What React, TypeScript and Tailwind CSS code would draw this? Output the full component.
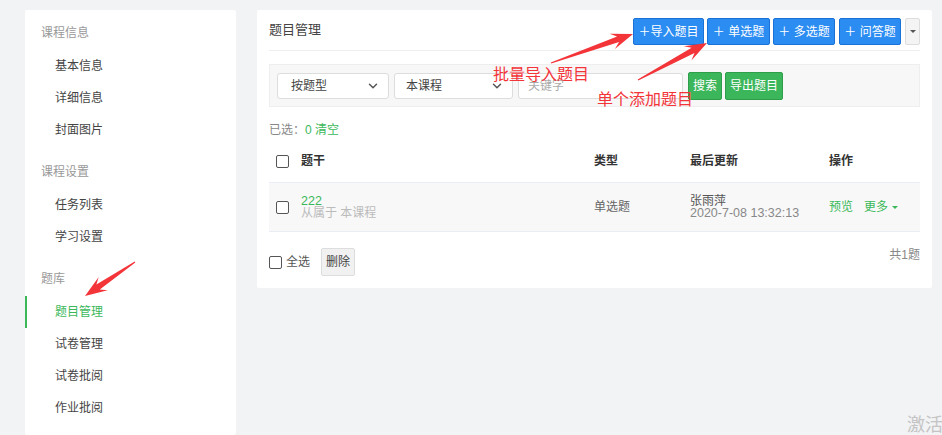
import { ChevronDown } from "lucide-react";

const sideGroups = [
  { title: "课程信息", items: ["基本信息", "详细信息", "封面图片"] },
  { title: "课程设置", items: ["任务列表", "学习设置"] },
  { title: "题库", items: ["题目管理", "试卷管理", "试卷批阅", "作业批阅"] },
];

const ACTIVE = "题目管理";

// tapered screenshot-style arrow, tail -> tip
function arrowPoints(x1: number, y1: number, x2: number, y2: number) {
  const dx = x2 - x1;
  const dy = y2 - y1;
  const len = Math.hypot(dx, dy);
  const ux = dx / len;
  const uy = dy / len;
  const nx = -uy;
  const ny = ux;
  const headLen = 22;
  const jx = x2 - ux * headLen * 0.72;
  const jy = y2 - uy * headLen * 0.72;
  const wx = x2 - ux * headLen;
  const wy = y2 - uy * headLen;
  const pts = [
    [x1 + nx * 0.6, y1 + ny * 0.6],
    [jx + nx * 3, jy + ny * 3],
    [wx + nx * 8, wy + ny * 8],
    [x2, y2],
    [wx - nx * 8, wy - ny * 8],
    [jx - nx * 3, jy - ny * 3],
    [x1 - nx * 0.6, y1 - ny * 0.6],
  ];
  return pts.map((p) => `${p[0].toFixed(1)},${p[1].toFixed(1)}`).join(" ");
}

function Checkbox() {
  return <span className="inline-block w-[13px] h-[13px] border border-[#555] rounded-[2px] bg-white" />;
}

function Sidebar() {
  return (
    <aside className="w-[211px] shrink-0 bg-white rounded-[2px] pt-[13px] pb-[24px]">
      {sideGroups.map((g, gi) => (
        <div key={g.title} className={gi > 0 ? "mt-[16px]" : ""}>
          <div className="h-[20px] leading-[20px] pl-[16px] text-[12px] text-[#999]">{g.title}</div>
          <ul className="mt-[7px]">
            {g.items.map((item) => {
              const active = item === ACTIVE;
              return (
                <li
                  key={item}
                  className={
                    active
                      ? "h-[32px] leading-[32px] pl-[28px] text-[12px] text-[#3bb85a] border-l-2 border-[#3bb85a]"
                      : "h-[32px] leading-[32px] pl-[30px] text-[12px] text-[#444]"
                  }
                >
                  {item}
                </li>
              );
            })}
          </ul>
        </div>
      ))}
    </aside>
  );
}

function BlueButton({ label, className }: { label: string; className: string }) {
  return (
    <button
      type="button"
      className={`h-[27px] ${className} bg-[#2b8cf2] border border-[#1b72d6] text-white text-[12px] rounded-[2px] flex items-center justify-center whitespace-nowrap`}
    >
      {label}
    </button>
  );
}

function FakeSelect({ label, width, pl }: { label: string; width: string; pl: string }) {
  return (
    <div
      className={`${width} ${pl} h-[26px] bg-white border border-[#ddd] rounded-[3px] flex items-center justify-between pr-[8px] text-[12px] text-[#444]`}
    >
      <span>{label}</span>
      <ChevronDown size={14} strokeWidth={2.5} className="text-[#555]" />
    </div>
  );
}

const rowCell = "h-[50px] bg-[#f8f8f8] border-t border-b border-[#e9eef4]";

function MainPanel() {
  return (
    <section className="w-[675px] shrink-0 self-start bg-white rounded-[2px] px-[12px] pb-[12px]">
      {/* header */}
      <div className="flex items-center justify-between pt-[8px] pb-[5px] border-b border-[#eee]">
        <h2 className="text-[13px] text-[#444] font-normal -mt-[4px]">题目管理</h2>
        <div className="flex items-center">
          <BlueButton label="＋导入题目" className="w-[71px]" />
          <BlueButton label="＋ 单选题" className="w-[63px] ml-[3px]" />
          <BlueButton label="＋ 多选题" className="w-[62px] ml-[3px]" />
          <BlueButton label="＋ 问答题" className="w-[62px] ml-[4px]" />
          <button
            type="button"
            className="w-[15px] h-[27px] ml-[4px] bg-[#f4f4f4] border border-[#ddd] rounded-[2px] flex items-center justify-center"
          >
            <span className="block w-0 h-0 border-l-[3px] border-r-[3px] border-t-[3px] border-l-transparent border-r-transparent border-t-[#555]" />
          </button>
        </div>
      </div>

      {/* filter bar */}
      <div className="mt-[13px] h-[43px] bg-[#f7f7f7] border border-[#eee] flex items-center pl-[7px]">
        <FakeSelect label="按题型" width="w-[112px]" pl="pl-[13px]" />
        <div className="ml-[5px]">
          <FakeSelect label="本课程" width="w-[119px]" pl="pl-[11px]" />
        </div>
        <div className="ml-[5px] w-[165px] h-[26px] bg-white border border-[#ddd] rounded-[3px] flex items-center pl-[9px] text-[12px] text-[#aaa]">
          关键字
        </div>
        <button
          type="button"
          className="ml-[5px] w-[34px] h-[28px] bg-[#3cb65b] border border-[#2f9e4b] rounded-[2px] text-white text-[12px]"
        >
          搜索
        </button>
        <button
          type="button"
          className="ml-[3px] w-[58px] h-[28px] bg-[#3cb65b] border border-[#2f9e4b] rounded-[2px] text-white text-[12px]"
        >
          导出题目
        </button>
      </div>

      {/* selection info */}
      <div className="mt-[13px] h-[20px] leading-[20px] text-[12px] text-[#888]">
        已选：<span className="text-[#3bb85a]">0 清空</span>
      </div>

      {/* table */}
      <div className="grid grid-cols-[32px_293px_96px_139px_1fr] text-[12px]">
        <div className="h-[42px] flex items-center pl-[7px]">
          <Checkbox />
        </div>
        <div className="h-[42px] flex items-center font-bold text-[#333]">题干</div>
        <div className="h-[42px] flex items-center font-bold text-[#333]">类型</div>
        <div className="h-[42px] flex items-center font-bold text-[#333]">最后更新</div>
        <div className="h-[42px] flex items-center font-bold text-[#333]">操作</div>

        <div className={`${rowCell} flex items-center pl-[7px]`}>
          <Checkbox />
        </div>
        <div className={`${rowCell} flex flex-col justify-center leading-[12px]`}>
          <span className="text-[#3bb85a] text-[12.5px]">222</span>
          <span className="text-[#bbb]">从属于 本课程</span>
        </div>
        <div className={`${rowCell} flex items-center text-[#666]`}>单选题</div>
        <div className={`${rowCell} flex flex-col justify-center leading-[12px]`}>
          <span className="text-[#555]">张雨萍</span>
          <span className="text-[#888] text-[12.5px]">2020-7-08 13:32:13</span>
        </div>
        <div className={`${rowCell} flex items-center text-[#3bb85a]`}>
          <span>预览</span>
          <span className="ml-[11px]">更多</span>
          <span className="ml-[4px] block w-0 h-0 border-l-[3px] border-r-[3px] border-t-[3px] border-l-transparent border-r-transparent border-t-[#3bb85a]" />
        </div>
      </div>

      {/* footer */}
      <div className="mt-[16px] flex items-center justify-between">
        <div className="flex items-center">
          <Checkbox />
          <span className="ml-[4px] text-[12px] text-[#555]">全选</span>
          <button
            type="button"
            className="ml-[11px] w-[34px] h-[28px] bg-[#f1f1f1] border border-[#ddd] rounded-[2px] text-[12px] text-[#444]"
          >
            删除
          </button>
        </div>
        <span className="text-[12px] text-[#888] -mt-[14px]">共1题</span>
      </div>
    </section>
  );
}

export default function App() {
  return (
    <div
      className="relative w-full min-h-[435px] h-[435px] overflow-hidden bg-[#f2f3f5] pt-[10px] pl-[25px] flex gap-[21px]"
      style={{ fontFamily: '"Liberation Sans", "Noto Sans CJK SC", sans-serif' }}
    >
      <Sidebar />
      <MainPanel />

      {/* red annotations laid over the page */}
      <svg className="absolute left-0 top-0 pointer-events-none" width={942} height={435}>
        <polygon points={arrowPoints(551, 63, 633, 34)} fill="#f3353a" />
        <polygon points={arrowPoints(638, 80, 707, 43)} fill="#f3353a" />
        <polygon points={arrowPoints(135, 262, 85, 296)} fill="#f3353a" />
      </svg>
      <span className="absolute left-[493px] top-[64px] text-[16px] leading-[22px] text-[#f3353a]">批量导入题目</span>
      <span className="absolute left-[597px] top-[89px] text-[16px] leading-[22px] text-[#f3353a]">单个添加题目</span>
      <span className="absolute left-[907px] top-[413px] text-[18px] leading-[24px] text-[#c4c4c4] whitespace-nowrap">激活</span>
    </div>
  );
}
